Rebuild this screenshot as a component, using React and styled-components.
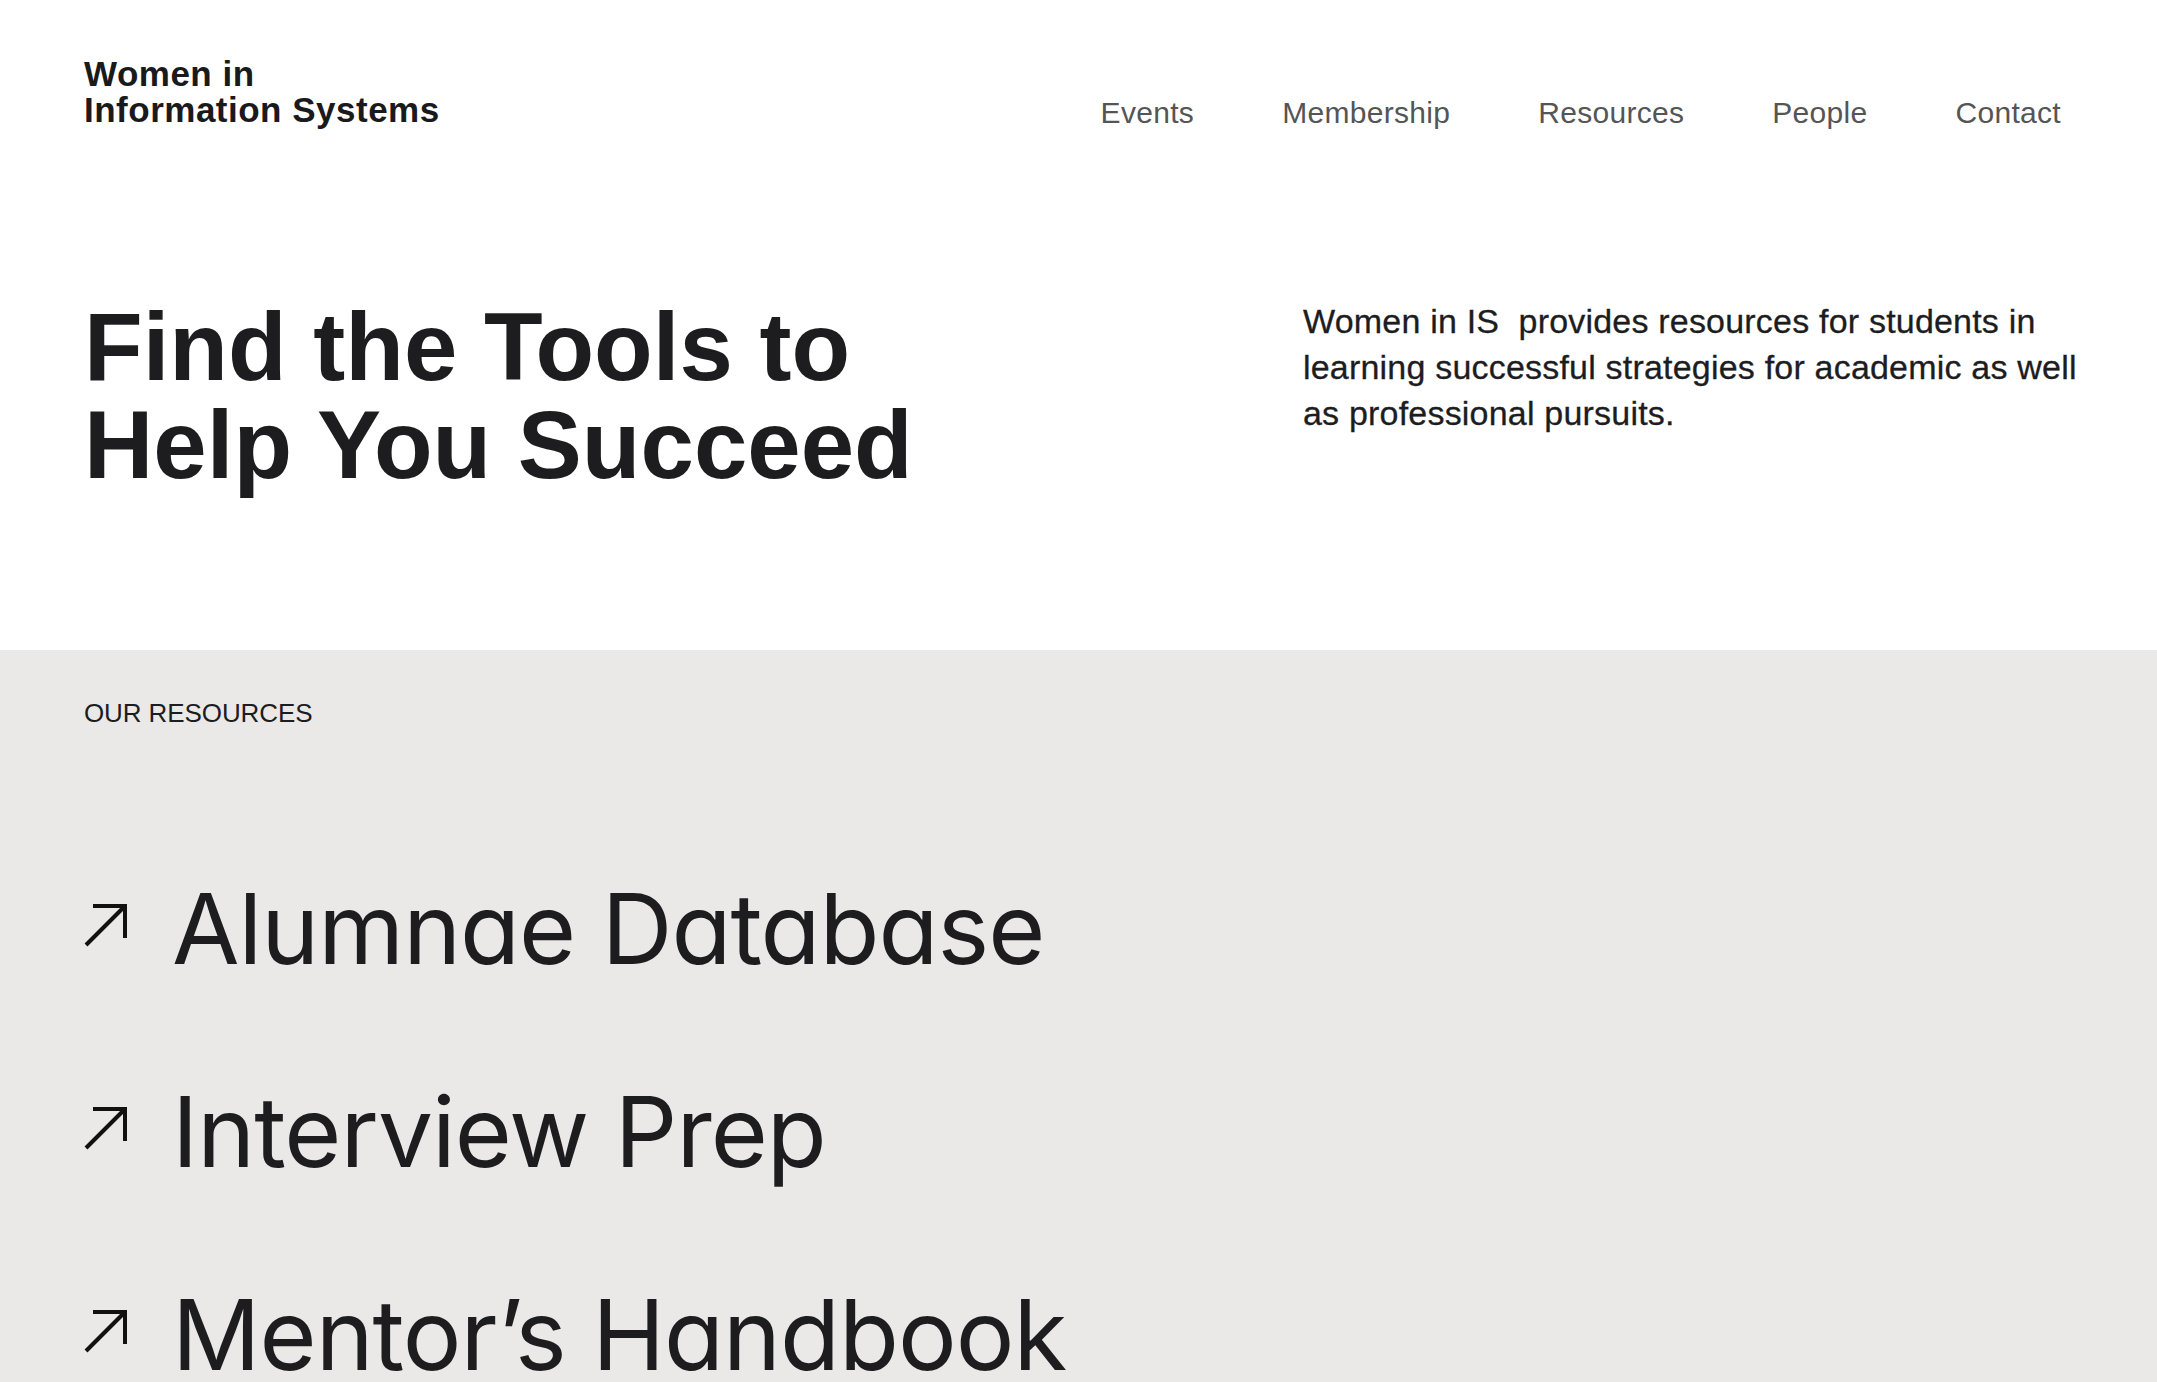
import styled, { createGlobalStyle } from "styled-components";

const GlobalStyle = createGlobalStyle`
    body {
        margin: 0;
        background: #ffffff;
        font-family: "Liberation Sans", Arial, sans-serif;
        color: #1d1d1f;
    }
`

const resources = ["Alumnae Database", "Interview Prep", "Mentor’s Handbook"];
const links = ["Events", "Membership", "Resources", "People", "Contact"];

function ArrowIcon() {
    return (
        <Arrow viewBox="0 0 44 44" fill="none" stroke="#111" strokeWidth="4">
            <path d="M2 42 L41 3" />
            <path d="M9 3 H41 V35" />
        </Arrow>
    );
}

export default function App() {
    return (
        <>
            <GlobalStyle />
            <Cabecalho>
                <Logo>
                    Women in
                    <br />
                    Information Systems
                </Logo>
                <Menu>
                    {links.map((l) => (
                        <MenuItem key={l}>{l}</MenuItem>
                    ))}
                </Menu>
            </Cabecalho>

            <Hero>
                <Titulo>
                    Find the Tools to
                    <br />
                    Help You Succeed
                </Titulo>
                <Descricao>
                    Women in IS{"\u00a0"} provides resources for students in learning successful
                    strategies for academic as well as professional pursuits.
                </Descricao>
            </Hero>

            <Recursos>
                <Rotulo>OUR RESOURCES</Rotulo>
                <Lista>
                    {resources.map((r) => (
                        <Linha key={r}>
                            <ArrowIcon />
                            <NomeRecurso>{r}</NomeRecurso>
                        </Linha>
                    ))}
                </Lista>
            </Recursos>
        </>
    );
}

const Cabecalho = styled.header`
    display: flex;
    justify-content: space-between;
    align-items: flex-start;
    padding: 56px 96px 0 84px;
`

const Logo = styled.div`
    font-family: "Liberation Sans", Arial, sans-serif;
    font-weight: 700;
    font-size: 35px;
    line-height: 36px;
    letter-spacing: 0.5px;
    color: #1a1a1c;
`

const Menu = styled.nav`
    display: flex;
    gap: 88px;
    margin-top: 40px;
`

const MenuItem = styled.a`
    font-family: "Liberation Sans", Arial, sans-serif;
    font-size: 30px;
    line-height: 34px;
    letter-spacing: 0.3px;
    color: #555555;
    text-decoration: none;
    cursor: pointer;
`

const Hero = styled.section`
    display: grid;
    grid-template-columns: 1fr 790px;
    padding: 168px 64px 156px 84px;
`

const Titulo = styled.h1`
    margin: 0;
    font-family: "Liberation Sans", Arial, sans-serif;
    font-weight: 700;
    font-size: 96px;
    line-height: 98px;
    letter-spacing: 0;
    color: #1d1d1f;
`

const Descricao = styled.p`
    margin: 0;
    font-family: "Liberation Sans", Arial, sans-serif;
    font-size: 34px;
    line-height: 46px;
    letter-spacing: 0.2px;
    color: #1d1d1f;
    -webkit-text-stroke: 0.3px #1d1d1f;
`

const Recursos = styled.section`
    background: #eae9e7;
    padding: 48px 84px 80px;
`

const Rotulo = styled.h2`
    margin: 0;
    font-family: "Liberation Sans", Arial, sans-serif;
    font-weight: 400;
    font-size: 26px;
    line-height: 30px;
    letter-spacing: -0.1px;
    color: #1d1d1f;
`

const Lista = styled.ul`
    list-style: none;
    margin: 99px 0 0;
    padding: 0;
`

const Linha = styled.li`
    display: flex;
    align-items: center;
    gap: 44px;
`

const Arrow = styled.svg`
    width: 44px;
    height: 44px;
    flex-shrink: 0;
    margin-bottom: 8px;
`

const NomeRecurso = styled.span`
    font-family: "Inter", sans-serif;
    font-feature-settings: "cv11" 1;
    font-weight: 400;
    font-size: 98px;
    line-height: 203px;
    letter-spacing: -1px;
    color: #1d1d1f;
`
